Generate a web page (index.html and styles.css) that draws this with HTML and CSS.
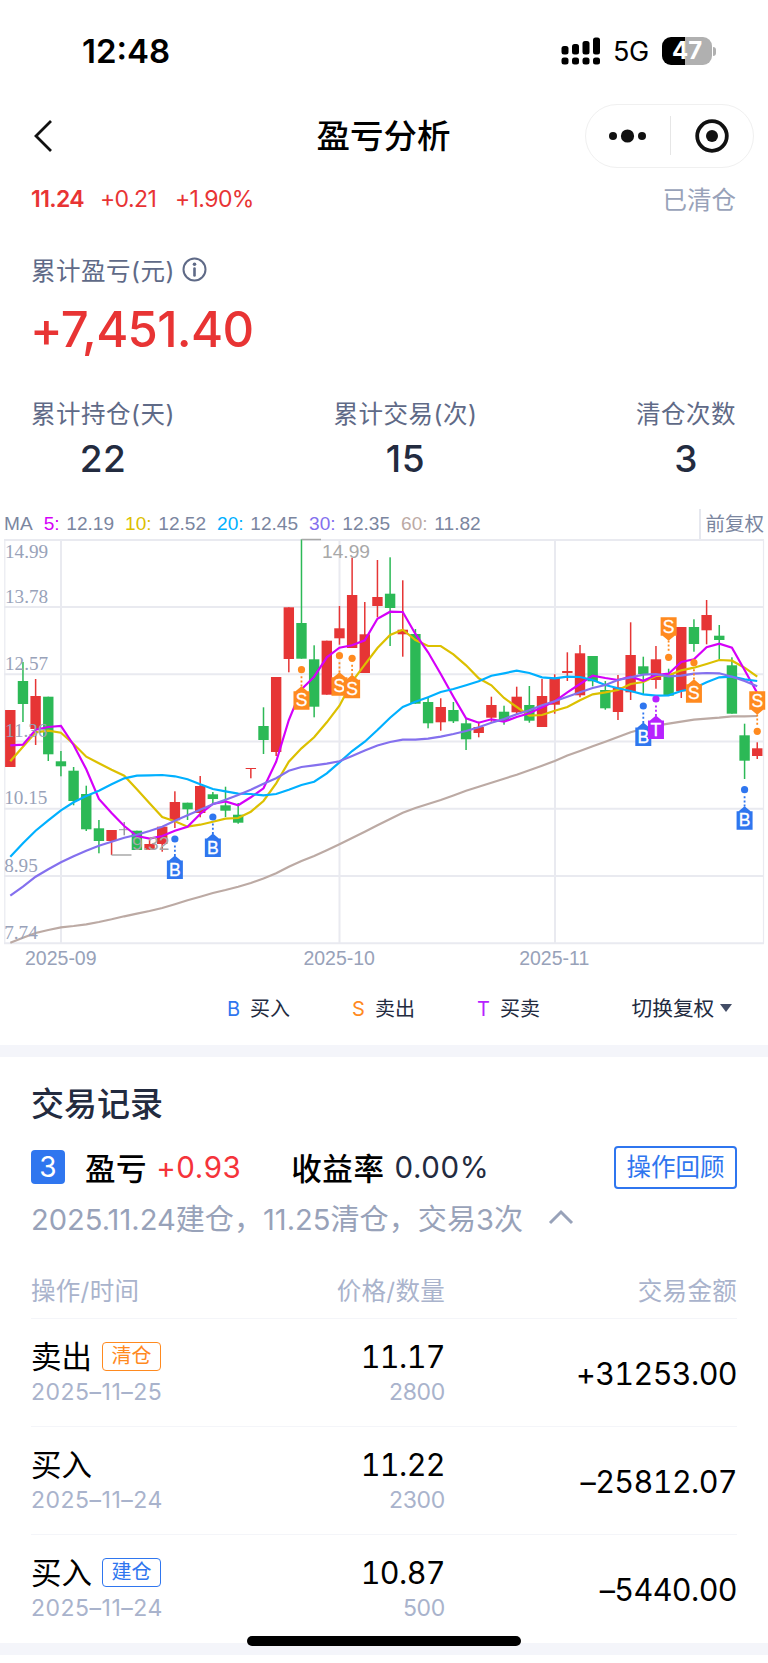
FILE: index.html
```html
<!DOCTYPE html>
<html lang="zh-CN">
  <head>
    <meta charset="UTF-8" />
    <meta name="viewport" content="width=device-width, initial-scale=1.0" />
    <title>盈亏分析</title>
    <link rel="stylesheet" href="styles.css">
  </head>
  <body>
    <!-- Status bar -->
    <div class="status-bar">
      <span class="time">12:48</span>
      <div class="status-icons">
        <svg class="signal" width="40" height="28" viewBox="0 0 40 28">
          <rect x="0.5" y="9" width="7" height="8.5" rx="2.5" />
          <rect x="11" y="7" width="7" height="10.5" rx="2.5" />
          <rect x="21.5" y="4" width="7" height="13.5" rx="2.5" />
          <rect x="32" y="0.5" width="7" height="17" rx="2.5" />
          <rect x="0.5" y="20.5" width="7" height="7" rx="2.5" />
          <rect x="11" y="20.5" width="7" height="7" rx="2.5" />
          <rect x="21.5" y="20.5" width="7" height="7" rx="2.5" />
          <rect x="32" y="20.5" width="7" height="7" rx="2.5" />
        </svg>
        <span class="network">5G</span>
        <div class="battery">47</div>
        <div class="battery-tip"></div>
      </div>
    </div>

    <!-- Nav bar -->
    <div class="nav-bar">
      <svg class="back" width="20" height="34" viewBox="0 0 20 34">
        <path d="M18 2 L3 17 L18 32" fill="none" stroke="#111" stroke-width="2.8" />
      </svg>
      <h1>盈亏分析</h1>
      <div class="capsule">
        <svg width="38" height="16" viewBox="0 0 38 16">
          <circle cx="5" cy="8" r="4" />
          <circle cx="19.5" cy="8" r="6.6" />
          <circle cx="34" cy="8" r="4" />
        </svg>
        <div class="capsule-line"></div>
        <svg width="34" height="34" viewBox="0 0 34 34">
          <circle cx="17" cy="17" r="14.8" fill="none" stroke="#111" stroke-width="3.8" />
          <circle cx="17" cy="17" r="6" />
        </svg>
      </div>
    </div>

    <!-- Price -->
    <div class="price-row">
      <span class="price">11.24</span>
      <span class="change">+0.21</span>
      <span class="percent">+1.90%</span>
      <span class="state">已清仓</span>
    </div>

    <!-- Total profit -->
    <div class="total">
      <div class="total-label">
        累计盈亏(元)
        <svg width="25" height="25" viewBox="0 0 25 25">
          <circle cx="12.5" cy="12.5" r="11" fill="none" stroke="#5f6a87" stroke-width="2" />
          <circle cx="12.5" cy="7.3" r="1.8" fill="#5f6a87" />
          <path d="M12.5 11.5 V18.5" stroke="#5f6a87" stroke-width="2.6" stroke-linecap="round" />
        </svg>
      </div>
      <div class="total-value">+7,451.40</div>
    </div>

    <div class="stats">
      <div class="stat">
        <span>累计持仓(天)</span>
        <b>22</b>
      </div>
      <div class="stat">
        <span>累计交易(次)</span>
        <b>15</b>
      </div>
      <div class="stat">
        <span>清仓次数</span>
        <b>3</b>
      </div>
    </div>

    <!-- K-line chart -->
    <div class="ma-bar">
      <span>MA</span>
      <span class="ma"><i class="ma5">5:</i>12.19</span>
      <span class="ma"><i class="ma10">10:</i>12.52</span>
      <span class="ma"><i class="ma20">20:</i>12.45</span>
      <span class="ma"><i class="ma30">30:</i>12.35</span>
      <span class="ma"><i class="ma60">60:</i>11.82</span>
      <span class="adjust">前复权</span>
    </div>
    <svg id="chart" class="chart" width="768" height="434" viewBox="0 538 768 434"></svg>

    <div class="legend">
      <span class="legend-item"><i class="buy">B</i>买入</span>
      <span class="legend-item"><i class="sell">S</i>卖出</span>
      <span class="legend-item"><i class="both">T</i>买卖</span>
      <span class="switch">切换复权<i class="arrow"></i></span>
    </div>

    <div class="divider"></div>

    <!-- Trade records -->
    <div class="records">
      <h2>交易记录</h2>
      <div class="summary">
        <span class="badge">3</span>
        <span class="name">盈亏</span>
        <span class="profit">+0.93</span>
        <span class="name">收益率</span>
        <span class="rate">0.00%</span>
        <button>操作回顾</button>
      </div>
      <div class="period">
        2025.11.24建仓，11.25清仓，交易3次
        <svg width="26" height="16" viewBox="0 0 26 16">
          <path d="M2 14 L13 3 L24 14" fill="none" stroke="#98a2b9" stroke-width="3" />
        </svg>
      </div>

      <div class="row head">
        <span>操作/时间</span>
        <span>价格/数量</span>
        <span>交易金额</span>
      </div>
      <div class="row">
        <div>
          <p class="action">卖出<span class="tag orange">清仓</span></p>
          <p class="sub date">2025–11–25</p>
        </div>
        <div class="middle">
          <p class="value">11.17</p>
          <p class="sub">2800</p>
        </div>
        <div class="value amount">+31253.00</div>
      </div>
      <div class="row">
        <div>
          <p class="action">买入</p>
          <p class="sub date">2025–11–24</p>
        </div>
        <div class="middle">
          <p class="value">11.22</p>
          <p class="sub">2300</p>
        </div>
        <div class="value amount">–25812.07</div>
      </div>
      <div class="row last">
        <div>
          <p class="action">买入<span class="tag">建仓</span></p>
          <p class="sub date">2025–11–24</p>
        </div>
        <div class="middle">
          <p class="value">10.87</p>
          <p class="sub">500</p>
        </div>
        <div class="value amount">–5440.00</div>
      </div>
    </div>

    <div class="bottom">
      <div class="home-bar"></div>
    </div>

    <script src="chart.js"></script>
  </body>
</html>
```
FILE: styles.css
```css
* {
  box-sizing: border-box;
}
body {
  margin: 0;
  width: 768px;
  height: 1663px;
  overflow: hidden;
  background: #fff;
  color: #232b3f;
  font-family: Inter, "Noto Sans CJK SC", sans-serif;
}
h1,
h2,
p {
  margin: 0;
}
i {
  font-style: normal;
}

/* Status bar */
.status-bar {
  height: 102px;
  padding: 0 52px 0 82px;
  display: flex;
  justify-content: space-between;
  align-items: center;
  color: #000;
}
.time {
  font-size: 33px;
  font-weight: 600;
}
.status-icons {
  display: flex;
  align-items: center;
}
.network {
  margin: 1px 13px 0 12px;
  width: 36px;
  font-size: 27px;
  letter-spacing: -0.3px;
}
.battery {
  width: 50px;
  height: 28px;
  border-radius: 9px;
  background: linear-gradient(to right, #000 47%, #b0b0b0 47%);
  color: #fff;
  font-size: 24px;
  font-weight: 700;
  line-height: 28px;
  text-align: center;
}
.battery-tip {
  width: 3px;
  height: 9px;
  margin-left: 1px;
  border-radius: 0 4px 4px 0;
  background: #b0b0b0;
}

/* Nav bar */
.nav-bar {
  height: 67px;
  padding: 0 14px 0 33px;
  display: grid;
  grid-template-columns: 168px 1fr 169px;
  align-items: center;
}
h1 {
  color: #000;
  font-size: 33.5px;
  font-weight: 500;
  line-height: 66px;
  text-align: center;
  padding: 1px 19px 0 0;
}
.capsule {
  width: 169px;
  height: 64px;
  padding: 0 24px 0 22px;
  display: flex;
  align-items: center;
  justify-content: space-between;
  border: 1px solid #f0f0f0;
  border-radius: 32px;
  fill: #111;
}
.capsule-line {
  width: 1px;
  height: 39px;
  background: #e6e6e6;
}

/* Price row */
.price-row {
  height: 60px;
  padding: 0 32px 0 31px;
  display: flex;
  align-items: center;
  color: #e83434;
  font-size: 23px;
  letter-spacing: -0.6px;
}
.price {
  width: 69px;
  font-weight: 600;
}
.change {
  width: 75px;
}
.state {
  margin: -2px 0 0 auto;
  color: #98a2b9;
  font-size: 24.5px;
  letter-spacing: 0;
}

/* Total profit */
.total {
  height: 156px;
  padding: 22px 30px 0;
}
.total-label {
  height: 36px;
  padding-left: 1px;
  display: flex;
  align-items: center;
  gap: 7px;
  color: #5f6a87;
  font-size: 24.5px;
  letter-spacing: 0.5px;
}
.total-value {
  height: 84px;
  color: #e83434;
  font-size: 49px;
  font-weight: 500;
  letter-spacing: -0.7px;
  line-height: 86px;
}
.stats {
  height: 120px;
  padding: 8px 32px 0 31px;
  display: flex;
  justify-content: space-between;
}
.stat {
  display: flex;
  flex-direction: column;
  align-items: center;
  color: #5f6a87;
  font-size: 24.5px;
  letter-spacing: 0.5px;
  line-height: 42px;
}
.stat b {
  color: #232b3f;
  font-size: 37px;
  font-weight: 500;
  line-height: 47px;
}

/* K-line chart */
.ma-bar {
  height: 33px;
  padding: 4px 4px 0;
  display: flex;
  align-items: center;
  color: #7b869f;
  font-family: "Liberation Sans", "Noto Sans CJK SC", sans-serif;
  font-size: 19.1px;
}
.ma {
  margin-left: 11px;
}
.ma i {
  margin-right: 6.7px;
}
.ma5 {
  color: #d500f9;
}
.ma10 {
  color: #dcc000;
}
.ma20 {
  color: #00b0ff;
}
.ma30 {
  color: #8470ee;
}
.ma60 {
  color: #bcaaa4;
}
.adjust {
  margin-left: auto;
  padding-left: 4px;
  border-left: 2px solid #e6e8ef;
  font-size: 19.5px;
  line-height: 30px;
}
.chart {
  display: block;
}

/* Legend */
.legend {
  height: 73px;
  padding: 0 0 2px 227px;
  display: flex;
  align-items: center;
  font-size: 20px;
}
.legend-item {
  width: 125px;
}
.legend-item i {
  display: inline-block;
  width: 23px;
}
.buy {
  color: #2f76ef;
}
.sell {
  color: #ff8a1f;
}
.both {
  color: #b721ff;
}
.switch {
  margin: -1px 0 0 29.5px;
  display: flex;
  align-items: center;
  font-size: 20.7px;
}
.arrow {
  margin: 2px 0 0 6px;
  border: 6.5px solid transparent;
  border-top: 8px solid #434d66;
  border-bottom: 0;
}
.divider {
  height: 12px;
  background: #f4f5fa;
}

/* Trade records */
.records {
  height: 586px;
  padding: 22px 31px 0;
}
h2 {
  font-size: 33px;
  font-weight: 500;
  line-height: 50px;
}
.summary {
  height: 44px;
  margin-top: 16px;
  display: flex;
  align-items: center;
  font-size: 29.5px;
  letter-spacing: 0.6px;
}
.badge {
  width: 34px;
  height: 34px;
  margin-right: 20px;
  border-radius: 4px;
  background: #2f76ef;
  color: #fff;
  font-size: 28px;
  letter-spacing: 0;
  line-height: 34px;
  text-align: center;
}
.name {
  color: #000;
  font-size: 30.5px;
  font-weight: 500;
}
.profit {
  width: 135px;
  margin-left: 9px;
  color: #f5333a;
}
.rate {
  margin-left: 10px;
}
button {
  width: 123px;
  height: 43px;
  margin-left: auto;
  padding: 0;
  border: 2px solid #2f76ef;
  border-radius: 4px;
  background: #fff;
  color: #2f76ef;
  font-family: inherit;
  font-size: 24.5px;
  line-height: 34px;
}
.period {
  height: 60px;
  padding-bottom: 4px;
  display: flex;
  align-items: center;
  color: #98a2b9;
  font-size: 29.1px;
}
.period svg {
  margin-left: 25px;
}
.row {
  height: 108px;
  display: grid;
  grid-template-columns: 200px 214px 1fr;
  align-items: center;
  border-bottom: 1px solid #f4f5f9;
}
.middle,
.amount,
.head span + span {
  text-align: right;
}
.head {
  height: 70px;
  padding-top: 12px;
  color: #a9b3cc;
  font-size: 24.5px;
  letter-spacing: 0.3px;
}
.last {
  border-bottom: 0;
}
.action {
  height: 38px;
  display: flex;
  align-items: center;
  color: #000;
  font-size: 30.5px;
  line-height: 36px;
}
.tag {
  width: 59px;
  height: 29px;
  margin: -1px 0 0 10px;
  border: 1px solid #2f76ef;
  border-radius: 4px;
  color: #2f76ef;
  font-size: 20px;
  line-height: 26px;
  text-align: center;
}
.orange {
  border-color: #ff8a1f;
  color: #ff8a1f;
}
.value {
  color: #000;
  font-size: 30.5px;
  font-variant-numeric: tabular-nums;
  letter-spacing: -0.6px;
  line-height: 38px;
}
.amount {
  padding-top: 2px;
}
.sub {
  color: #a9b3cc;
  font-size: 23px;
  letter-spacing: -0.3px;
  line-height: 32px;
}
.date {
  letter-spacing: 0.5px;
}

/* Bottom edge */
.bottom {
  height: 12px;
  background: #f4f5fa;
}
.home-bar {
  width: 274px;
  height: 10px;
  margin: 0 auto;
  position: relative;
  top: -7px;
  border-radius: 5px;
  background: #000;
}
```
FILE: chart.js
```js
const NS = "http://www.w3.org/2000/svg";
const chart = document.getElementById("chart");
const RED = "#e63535";
const GREEN = "#2cb956";
const GRAY = "#9a9aa0";

// x position of the candle at an index
const px = (i) => 10.3 + i * 12.66;

function add(name, attrs, text) {
  const el = document.createElementNS(NS, name);
  for (const key in attrs) el.setAttribute(key, attrs[key]);
  if (text) el.textContent = text;
  chart.appendChild(el);
}

// Grid
[540, 607, 674.3, 741.5, 808.7, 876, 943.2].forEach((y) =>
  add("path", { d: `M4 ${y} H764`, stroke: "#e9eaf0", "stroke-width": 2 })
);
[4.8, 763.5].forEach((x) =>
  add("path", { d: `M${x} 540 V943`, stroke: "#e9eaf0", "stroke-width": 1.2 })
);
[61, 339.5, 555].forEach((x) =>
  add("path", { d: `M${x} 540 V943`, stroke: "#e9eaf0", "stroke-width": 2 })
);

// Candles: color, high, body top, body bottom, low
const candles = [
  ["r", 710, 710, 767, 767],
  ["g", 662, 681, 704, 722],
  ["r", 679, 696, 729, 745],
  ["g", 696.7, 696.7, 754.3, 761],
  ["g", 751, 761.3, 766.3, 776.3],
  ["g", 767, 770.7, 801, 805.3],
  ["g", 785.7, 794, 829.3, 831],
  ["g", 820, 828.3, 841, 853.3],
  ["r", 830, 830, 841, 855],
  ["x", 822, 829.2, 830.2, 835.3],
  ["g", 830.7, 830.7, 850, 850],
  ["r", 840, 844, 849.7, 849.7],
  ["r", 826.7, 826.7, 844, 851.7],
  ["r", 791.3, 802, 820.3, 828],
  ["g", 802.7, 802.7, 809.3, 820],
  ["r", 776, 786, 813, 817.3],
  ["g", 792, 794.3, 799, 804],
  ["g", 786.7, 805.3, 810.7, 817],
  ["g", 803, 814.7, 822.7, 823.7],
  ["r", 768, 768, 769, 778.3],
  ["g", 707.3, 726, 740, 754],
  ["r", 677, 677, 752, 756],
  ["r", 607.3, 607.3, 659, 672.3],
  ["g", 539.3, 623, 658.7, 658.7],
  ["g", 645.3, 659.3, 706.7, 717.3],
  ["r", 640.7, 640.7, 694.7, 694.7],
  ["r", 606, 628.3, 638.3, 644.7],
  ["r", 557.7, 595, 648, 648],
  ["r", 602, 634.3, 673, 673],
  ["r", 560, 597, 606, 617.3],
  ["g", 557.3, 593.7, 608, 646],
  ["r", 580.3, 629.7, 634.3, 656.7],
  ["g", 629, 634, 703.7, 703.7],
  ["g", 696.7, 702, 723.3, 728.3],
  ["r", 698.3, 707, 722.3, 730.7],
  ["g", 702, 710, 721.3, 723],
  ["g", 719, 723.3, 739.3, 750],
  ["r", 721.7, 727, 733, 737.3],
  ["r", 696.7, 705, 717.7, 721.7],
  ["g", 705.7, 711.7, 721, 724.7],
  ["r", 686.7, 696.7, 712.3, 715],
  ["g", 686, 705, 720.7, 722.7],
  ["r", 679, 696, 727, 727],
  ["r", 674.3, 677.7, 704.7, 713.7],
  ["r", 652.3, 671, 673, 681],
  ["r", 645, 653.3, 695.3, 697.3],
  ["g", 656, 656, 681.3, 686.3],
  ["g", 681, 690, 708.3, 709.7],
  ["r", 675, 687.3, 712, 720],
  ["r", 622.3, 655, 692.3, 700],
  ["g", 656.7, 666.3, 674, 694],
  ["r", 646, 659.3, 680, 688.7],
  ["g", 668.7, 674.3, 695.7, 695.7],
  ["r", 627, 627, 691.3, 698],
  ["g", 619.3, 627, 644, 651.7],
  ["r", 600, 615, 630.3, 644.3],
  ["g", 625, 635.7, 640, 660],
  ["g", 657.3, 665.3, 713.7, 713.7],
  ["g", 723.7, 735.3, 760.7, 779],
  ["r", 742.3, 748.3, 756, 759],
];
const colors = { r: RED, g: GREEN, x: GRAY };
candles.forEach(([type, high, top, bottom, low], i) => {
  const fill = colors[type];
  add("rect", { x: px(i) - 0.75, y: high, width: 1.5, height: low - high, fill });
  add("rect", { x: px(i) - 5.2, y: top, width: 10.4, height: bottom - top, fill });
});

// Moving averages
const lines = {
  "#bcaaa4": [
    942.7, 937.7, 933, 930, 927.3, 926, 924.3, 922, 919.3, 916.3, 913.7, 911,
    908, 904.3, 900.3, 896.7, 893, 890, 886.7, 883, 878.5, 873.3, 866.7, 861,
    856, 850.3, 844.3, 838, 831.7, 825.3, 819, 812.7, 808, 804, 800, 795.5,
    790.7, 786.7, 782.7, 778.7, 774.7, 770.3, 765.7, 761, 755.5, 751, 746.3,
    741.7, 737, 732.3, 728.7, 725.7, 723.7, 721.7, 719.7, 718.7, 717.7, 716.3,
    716.3, 716,
  ],
  "#dcc000": [
    761.3, 746.7, 732.3, 730.7, 732.7, 744, 756.7, 763.3, 769.7, 775.7, 789.3,
    803.3, 817, 821.3, 826.7, 824.7, 821.7, 818.7, 818, 811.7, 801, 783.3,
    761.7, 748.3, 737.3, 722.3, 705.7, 681.7, 664.7, 648, 635, 629.7, 640, 646,
    646, 654.3, 665.3, 678.3, 685.3, 698, 707, 715.7, 715, 710.7, 707, 700.3,
    694.3, 692.3, 690, 684, 682, 676, 675.3, 670.3, 667.7, 664, 660, 660.7,
    667.7, 676.7,
  ],
  "#d500f9": [
    745.3, 744.7, 729.7, 727, 726, 745, 769.3, 799, 813, 826, 836, 838.7, 836,
    830.7, 826.7, 814, 804, 801.5, 805.3, 797.3, 788.3, 761.7, 720, 689.3,
    676.7, 657.3, 647.7, 645.3, 640.3, 618.7, 611.7, 612, 634, 652.3, 674,
    696.7, 718.3, 722.7, 719.3, 721.7, 717, 713.3, 707.3, 701.3, 692.3, 684,
    675.7, 678, 680, 676.7, 680.7, 675, 673.7, 662, 659.3, 647.3, 643.7, 647.7,
    670, 693,
  ],
  "#00b0ff": [
    856.7, 843.3, 830.7, 820.3, 810.3, 802.3, 796, 790.7, 784.3, 778.3, 775.7,
    775.3, 775, 776.3, 779.3, 784.3, 789, 791.3, 793.7, 794, 795.3, 794, 789.7,
    785, 781.7, 773.3, 762.3, 751, 741.7, 730, 717.7, 707, 701.7, 697.3, 692,
    689, 685.3, 681.3, 675.7, 673.3, 670.7, 673, 677.3, 678.3, 676.7, 677, 680,
    685, 688.3, 691, 694.3, 695.7, 695.3, 691, 688.3, 682.3, 677.3, 676.7,
    679.3, 681,
  ],
  "#8470ee": [
    895.7, 886.7, 876.7, 869.3, 862.3, 856.3, 850.7, 845.7, 841.7, 837.7,
    834.7, 831, 826.7, 820.7, 815.3, 809.7, 804.3, 799.7, 795, 789.7, 783.7,
    778.3, 770.7, 767, 765.3, 763.7, 761.3, 756, 750.5, 745.5, 742, 739.7,
    739.7, 738.7, 736.7, 734, 731, 727.3, 722.7, 719, 714.3, 710.3, 705.3,
    701.3, 696.7, 692.3, 688, 685, 680, 677.3, 674.7, 674, 676.3, 675.7, 673.7,
    673, 673.3, 676.7, 681, 686.3,
  ],
};
for (const stroke in lines) {
  const points = lines[stroke].map((y, i) => `${px(i)},${y}`).join(" ");
  add("polyline", { points, fill: "none", stroke, "stroke-width": 2.2 });
}

// Price labels
const prices = {
  14.99: 557.5,
  13.78: 602.5,
  12.57: 669.7,
  11.36: 737,
  10.15: 804,
  8.95: 871.7,
  7.74: 938.7,
};
for (const price in prices) {
  const x = price < 10.2 ? 4.2 : 5;
  add("text", { x, y: prices[price], fill: "#98a2b9", "font-family": "Liberation Serif", "font-size": 19.2 }, price);
}

// Highest and lowest price
const extreme = { fill: "#a8a8a8", "font-family": "Liberation Sans", "font-size": 19.2 };
add("path", { d: "M301.5 539.5 H321", stroke: "#a8a8a8", "stroke-width": 1.5 });
add("text", { x: 322, y: 557.5, ...extreme }, "14.99");
add("path", { d: "M111.5 855 H131.5", stroke: "#a8a8a8", "stroke-width": 1.5 });
add("text", { x: 132, y: 850, ...extreme }, "9.32");

// Months
[["2025-09", 60.8], ["2025-10", 339.2], ["2025-11", 554.2]].forEach(([month, x]) =>
  add("text", { x, y: 965, "text-anchor": "middle", fill: "#98a2b9", "font-family": "Liberation Sans", "font-size": 19.5 }, month)
);

// Trade marks: letter, candle index, dot y, direction (1 = flag below the dot)
const marks = [
  ["B", 13, 839, 1],
  ["B", 16, 817, 1],
  ["S", 23, 669.7, 1],
  ["S", 26, 655.7, 1],
  ["S", 27, 658.3, 1],
  ["B", 50, 706, 1],
  ["T", 51, 699, 1],
  ["S", 52, 657.3, -1],
  ["S", 54, 662.7, 1],
  ["B", 58, 789.7, 1],
  ["S", 59, 731.3, -1],
];
const markColors = { B: "#2f76ef", S: "#ff8a1f", T: "#b721ff" };
marks.forEach(([letter, i, y, dir]) => {
  const x = px(i);
  const fill = markColors[letter];
  const at = (d) => y + d * dir;
  add("circle", { cx: x, cy: y, r: 3.6, fill });
  add("path", { d: `M${x} ${at(6.5)} V${at(18)}`, stroke: fill, "stroke-width": 1.8, "stroke-dasharray": "2 2.2" });
  add("polygon", {
    points: `${x},${at(16.5)} ${x + 6},${at(21.5)} ${x + 8},${at(21.5)} ${x + 8},${at(40)} ${x - 8},${at(40)} ${x - 8},${at(21.5)} ${x - 6},${at(21.5)}`,
    fill,
  });
  add("text", { x, y: at(30.5) + 6, "text-anchor": "middle", fill: "#fff", stroke: "#fff", "stroke-width": 0.3, "font-family": "Liberation Sans", "font-size": 17.5 }, letter);
});
```
